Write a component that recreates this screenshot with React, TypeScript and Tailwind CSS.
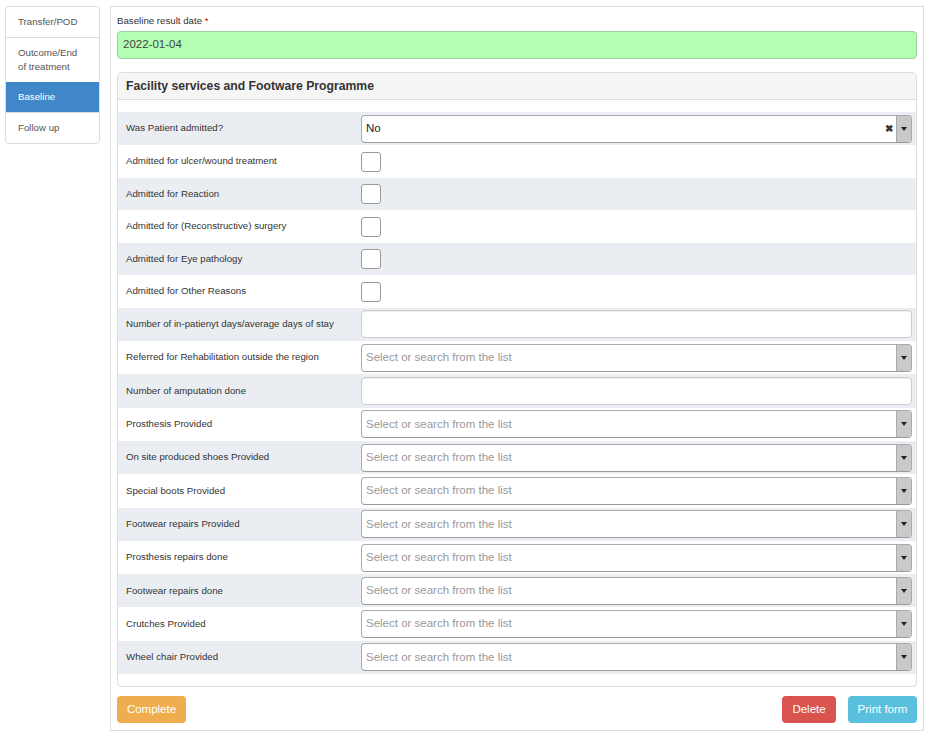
const rows: { label: string; kind: "select" | "check" | "text"; value?: string }[] = [
  { label: "Was Patient admitted?", kind: "select", value: "No" },
  { label: "Admitted for ulcer/wound treatment", kind: "check" },
  { label: "Admitted for Reaction", kind: "check" },
  { label: "Admitted for (Reconstructive) surgery", kind: "check" },
  { label: "Admitted for Eye pathology", kind: "check" },
  { label: "Admitted for Other Reasons", kind: "check" },
  { label: "Number of in-patienyt days/average days of stay", kind: "text" },
  { label: "Referred for Rehabilitation outside the region", kind: "select" },
  { label: "Number of amputation done", kind: "text" },
  { label: "Prosthesis Provided", kind: "select" },
  { label: "On site produced shoes Provided", kind: "select" },
  { label: "Special boots Provided", kind: "select" },
  { label: "Footwear repairs Provided", kind: "select" },
  { label: "Prosthesis repairs done", kind: "select" },
  { label: "Footwear repairs done", kind: "select" },
  { label: "Crutches Provided", kind: "select" },
  { label: "Wheel chair Provided", kind: "select" },
];

const tabs = ["Transfer/POD", "Outcome/End of treatment", "Baseline", "Follow up"];

const Select = ({ value }: { value?: string }) => (
  <div className="flex h-[28px] w-full rounded-[4px] border border-[#aaa] border-b-[#999] bg-white">
    <div className="flex flex-1 items-center pl-[4px] text-[11.5px]">
      {value ? (
        <span className="text-[#222]">{value}</span>
      ) : (
        <span className="text-[#999]">Select or search from the list</span>
      )}
    </div>
    {value && (
      <div className="mr-[1px] flex w-[12px] items-center justify-center text-[10px] font-bold text-[#333]">✖</div>
    )}
    <div className="flex w-[15px] items-center justify-center rounded-r-[3px] border-l border-[#aaa] bg-[#c9c9c9]">
      <svg width="6" height="4" viewBox="0 0 6 4">
        <path d="M0 0h6L3 4z" fill="#222" />
      </svg>
    </div>
  </div>
);

export default function App() {
  return (
    <div className="flex gap-[10px] pl-[5px] pt-[6px] font-['Liberation_Sans',Arial,sans-serif] text-[#333]">
      <div className="h-fit w-[95px] shrink-0 overflow-hidden rounded-[4px] border border-[#ddd] bg-white text-[9.7px] leading-[14px]">
        {tabs.map((t, i) => (
          <div
            key={t}
            className={
              t === "Baseline"
                ? "bg-[#3f87c8] py-[8px] pl-[12px] pr-[14px] text-white"
                : i === 0
                ? "py-[8px] pl-[12px] pr-[14px] text-[#555]"
                : "border-t border-[#ddd] py-[8px] pl-[12px] pr-[14px] text-[#555]"
            }
          >
            {t}
          </div>
        ))}
      </div>

      <div className="mr-[9px] flex-1 border border-[#ddd] bg-white px-[6px] pb-[7px] pt-[7px]">
        <div className="text-[9.7px] leading-[13px]">
          Baseline result date <span className="text-[#c00]">*</span>
        </div>
        <div className="mt-[4px] flex h-[28px] items-center rounded-[4px] border border-[#9fd09f] bg-[#b3feb3] pl-[5px] text-[11.5px] text-[#444]">
          2022-01-04
        </div>

        <div className="mt-[13px] rounded-[4px] border border-[#ddd]">
          <div className="flex h-[27px] items-center border-b border-[#ddd] bg-[#f5f5f5] pl-[8px] text-[12.2px] font-bold text-[#333]">
            Facility services and Footware Programme
          </div>
          <div className="pb-[12px] pt-[12px]">
            {rows.map((r, i) => (
              <div
                key={r.label}
                className={
                  (r.kind === "check" ? "h-[32.5px] " : "h-[33.3px] ") +
                  (i % 2 === 0
                    ? "grid grid-cols-[243px_1fr] items-center bg-[#eaeef2] pr-[4px]"
                    : "grid grid-cols-[243px_1fr] items-center bg-white pr-[4px]")
                }
              >
                <div className="pl-[8px] text-[9.7px] text-[#333]">{r.label}</div>
                <div>
                  {r.kind === "select" && <Select value={r.value} />}
                  {r.kind === "check" && (
                    <div className="h-[20px] w-[20px] rounded-[3px] border border-[#999] bg-white" />
                  )}
                  {r.kind === "text" && (
                    <div className="h-[28px] w-full rounded-[4px] border border-[#ccc] bg-white shadow-[inset_0_1px_1px_rgba(0,0,0,0.075)]" />
                  )}
                </div>
              </div>
            ))}
          </div>
        </div>

        <div className="mt-[9px] flex items-center text-[11.5px] text-white">
          <button className="h-[27px] w-[69px] rounded-[4px] bg-[#f0ad4e]">Complete</button>
          <div className="flex-1" />
          <button className="h-[27px] w-[54px] rounded-[4px] bg-[#d9534f]">Delete</button>
          <button className="ml-[12px] h-[27px] w-[69px] rounded-[4px] bg-[#5bc0de]">Print form</button>
        </div>
      </div>
    </div>
  );
}
